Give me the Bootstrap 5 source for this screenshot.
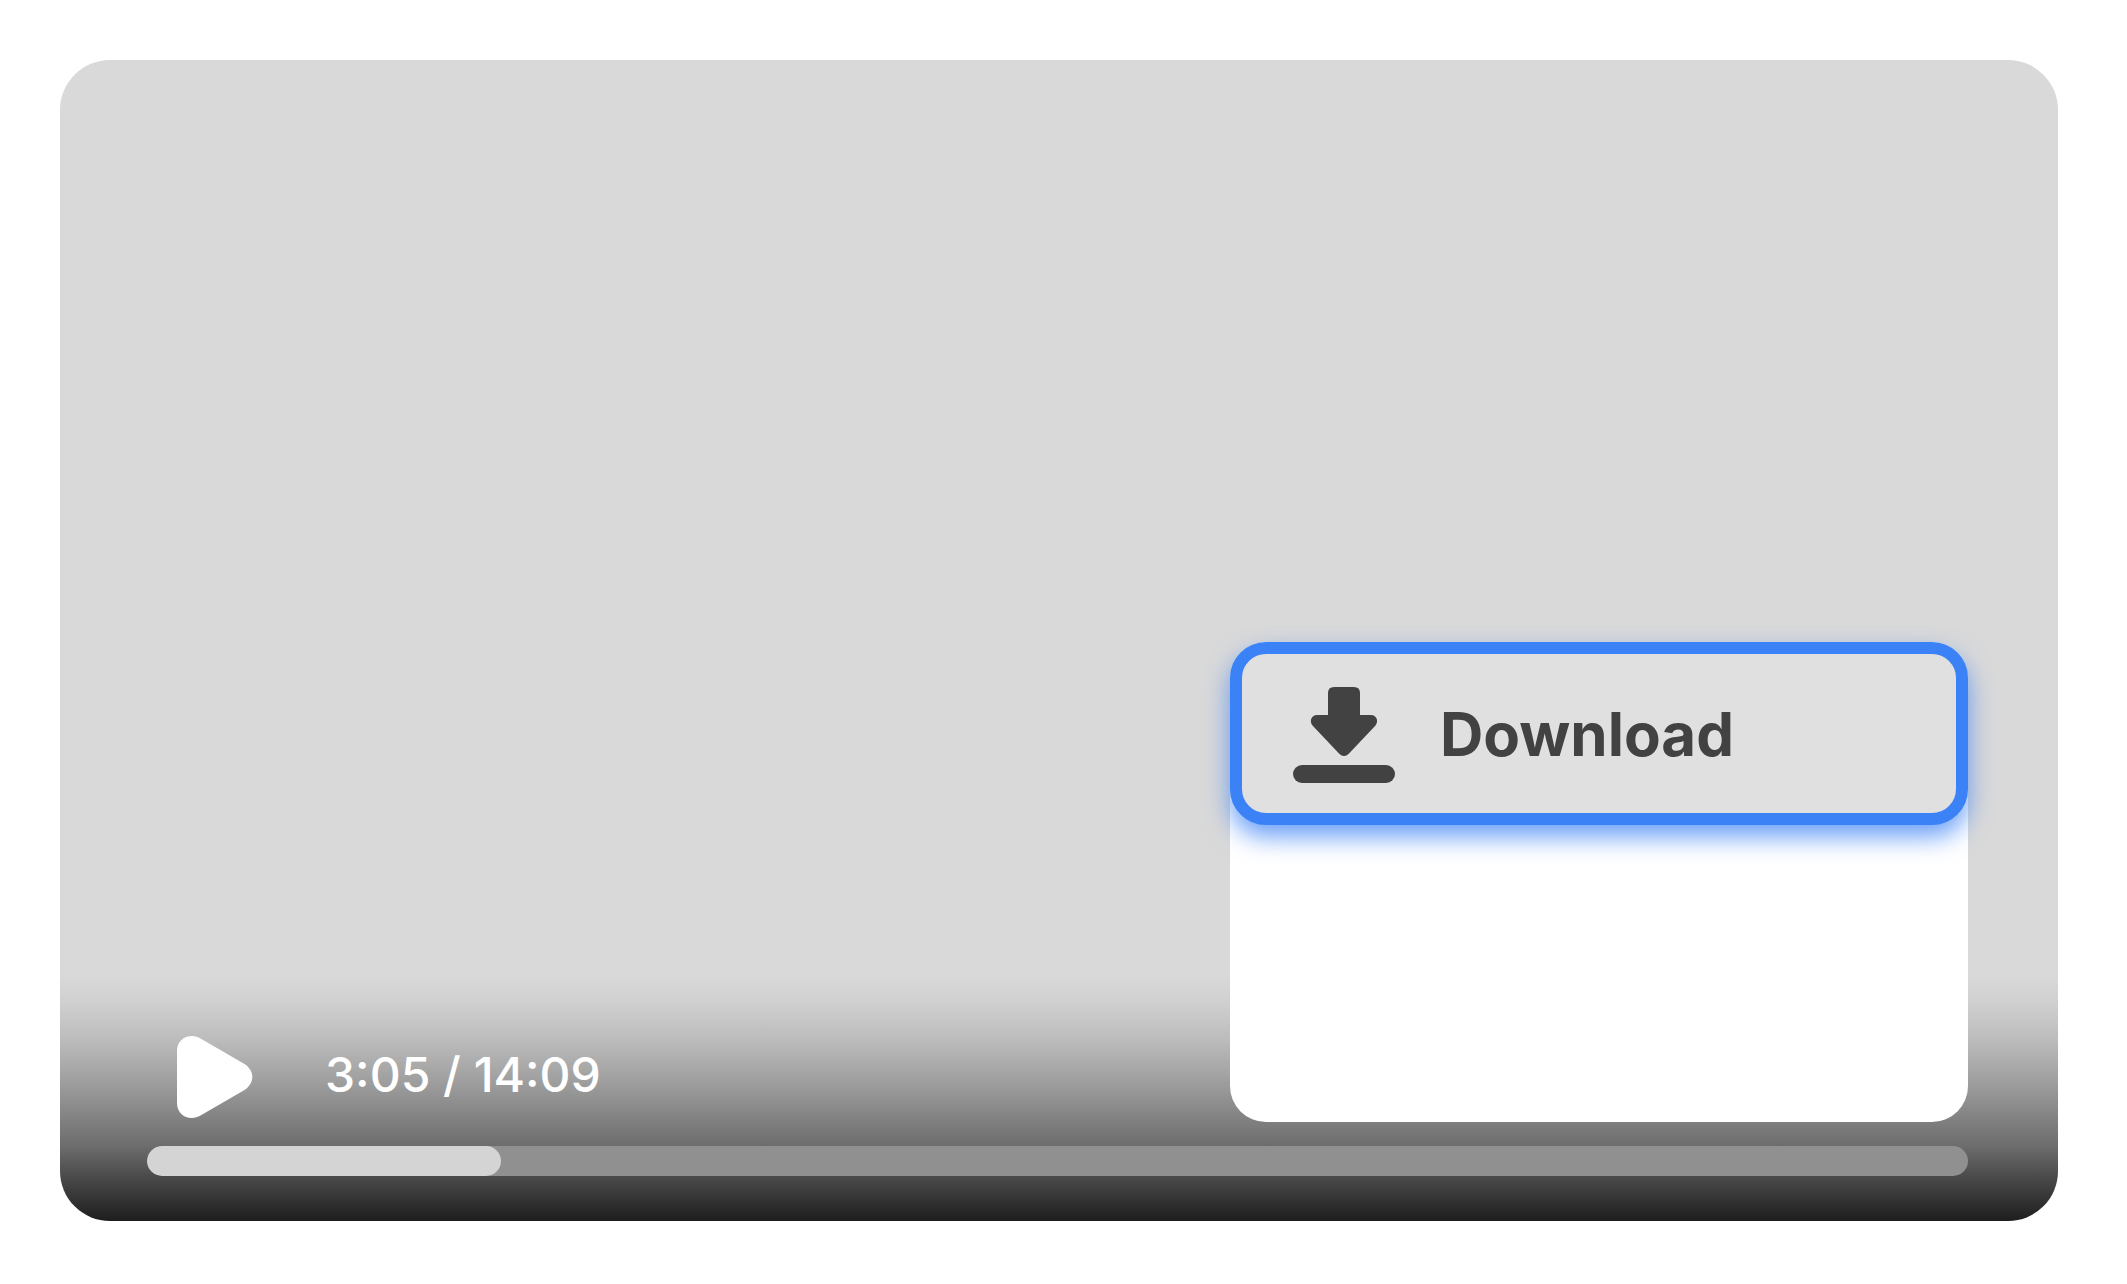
<!DOCTYPE html>
<html lang="en">
<head>
<meta charset="utf-8">
<meta name="viewport" content="width=device-width, initial-scale=1">
<title>Video player</title>
<link rel="stylesheet" href="https://cdn.jsdelivr.net/npm/bootstrap@5.3.0/dist/css/bootstrap.min.css">
<style>
  body {
    font-family: Inter, "Liberation Sans", sans-serif;
    padding: 60px 69px 63px 60px;
    background: #fff;
  }
  .player {
    border-radius: 50px;
    padding: 60px 90px 45px 87px;
    gap: 24px;
    background:
      linear-gradient(to bottom, #d9d9d9 0, #d1d1d1 24px, #c6c6c6 46px, #bbbbbb 66px, #9f9f9f 106px, #808080 146px, #6d6d6d 171px, #4b4b4b 201px, #1e1e1e 246px) bottom / 100% 246px no-repeat,
      #d9d9d9;
  }
  .transport { gap: 61px; padding-left: 21px; }
  .time-label { font-size: 48px; line-height: 60px; font-weight: 500; }
  .overflow-menu {
    width: 738px;
    height: 480px;
    border-radius: 36px;
  }
  .menu-entry {
    height: 183px;
    padding: 0 39px 0 51px;
    gap: 45px;
    border: 12px solid #3b82f6;
    border-radius: 36px;
    background: #e0e0e0;
    color: #424242;
    font-size: 60px;
    line-height: 72px;
    font-weight: 700;
    box-shadow: 0 12px 24px rgba(59, 130, 246, .75);
  }
  .seek-track { height: 30px; border-radius: 15px; background: #909090; }
  .seek-fill { border-radius: 15px; background: #d4d4d4; }
</style>
</head>
<body class="min-vh-100 d-flex flex-column">
<main class="player flex-grow-1 d-flex flex-column justify-content-end">
  <div class="d-flex justify-content-between align-items-end">
    <div class="transport d-flex align-items-center text-white">
      <button type="button" class="btn p-0 border-0 d-flex text-white" aria-label="Play">
        <svg width="96" height="94" viewBox="0 2 96 94" aria-hidden="true">
          <path fill="currentColor" d="M9 25C9 16 15.500 10 24 10C27 10 30 11 32.500 12.500L76.500 38C87 45 87 57 76.500 64L32.500 89.500C30 91 27 92 24 92C15.500 92 9 86 9 77Z"/>
        </svg>
      </button>
      <span class="time-label">3:05 / 14:09</span>
    </div>
    <div class="overflow-menu bg-white">
      <button type="button" class="menu-entry w-100 d-flex align-items-center text-start">
        <svg width="102" height="98" viewBox="0 -2 102 98" fill="currentColor" aria-hidden="true">
          <path d="M35 28V6Q35 0 41 0H61Q67 0 67 6V28H78C83.500 28 86 34 82.500 38.500L56 66.500Q51 71.500 46 66.500L19.500 38.500C16 34 18.500 28 24 28Z"/>
          <rect y="78" width="102" height="18" rx="9"/>
        </svg>
        <span>Download</span>
      </button>
    </div>
  </div>
  <div class="progress seek-track" role="progressbar" aria-label="Playback position" aria-valuenow="185" aria-valuemin="0" aria-valuemax="849">
    <div class="progress-bar seek-fill" style="width: 19.44%"></div>
  </div>
</main>
<script src="https://cdn.jsdelivr.net/npm/bootstrap@5.3.0/dist/js/bootstrap.bundle.min.js"></script>
</body>
</html>
